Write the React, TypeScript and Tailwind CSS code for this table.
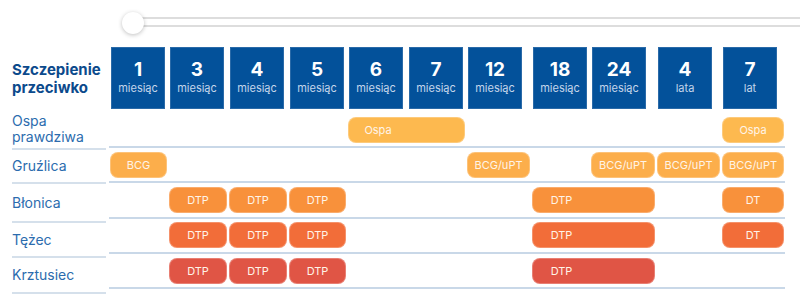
import React from 'react';

// Vaccination calendar: age columns with vaccine bars per disease row

const cols = 'grid grid-cols-[59px_60px_60px_59px_60px_59px_65px_59px_66px_65px_64px]';

type Bar = { start: number; span: number; label: string; firstWidth: number };

const ages = [
  { n: '1', unit: 'miesiąc' },
  { n: '3', unit: 'miesiąc' },
  { n: '4', unit: 'miesiąc' },
  { n: '5', unit: 'miesiąc' },
  { n: '6', unit: 'miesiąc' },
  { n: '7', unit: 'miesiąc' },
  { n: '12', unit: 'miesiąc' },
  { n: '18', unit: 'miesiąc' },
  { n: '24', unit: 'miesiąc' },
  { n: '4', unit: 'lata' },
  { n: '7', unit: 'lat' },
];

const dtp = (color: string): { color: string; bars: Bar[] } => ({
  color,
  bars: [
    { start: 2, span: 1, label: 'DTP', firstWidth: 58 },
    { start: 3, span: 1, label: 'DTP', firstWidth: 58 },
    { start: 4, span: 1, label: 'DTP', firstWidth: 57 },
    { start: 8, span: 2, label: 'DTP', firstWidth: 57 },
  ],
});

const rows: { color: string; bars: Bar[]; h: string }[] = [
  {
    color: 'bg-[#fdb94f]',
    h: 'h-[39px] pt-[8px]',
    bars: [
      { start: 5, span: 2, label: 'Ospa', firstWidth: 58 },
      { start: 11, span: 1, label: 'Ospa', firstWidth: 62 },
    ],
  },
  {
    color: 'bg-[#fcae4b]',
    h: 'h-[35px] pt-[4px]',
    bars: [
      { start: 1, span: 1, label: 'BCG', firstWidth: 57 },
      { start: 7, span: 1, label: 'BCG/uPT', firstWidth: 63 },
      { start: 9, span: 1, label: 'BCG/uPT', firstWidth: 64 },
      { start: 10, span: 1, label: 'BCG/uPT', firstWidth: 63 },
      { start: 11, span: 1, label: 'BCG/uPT', firstWidth: 62 },
    ],
  },
  {
    ...dtp('bg-[#f8913b]'),
    h: 'h-[36px] pt-[4px]',
    bars: [...dtp('').bars, { start: 11, span: 1, label: 'DT', firstWidth: 62 }],
  },
  {
    ...dtp('bg-[#f26d39]'),
    h: 'h-[35px] pt-[3px]',
    bars: [...dtp('').bars, { start: 11, span: 1, label: 'DT', firstWidth: 62 }],
  },
  { ...dtp('bg-[#e05545]'), h: 'h-[35px] pt-[4px]' },
];

const labels = [
  { text: ['Ospa', 'prawdziwa'], h: 'h-[41px]' },
  { text: ['Gruźlica'], h: 'h-[34px]' },
  { text: ['Błonica'], h: 'h-[39px]' },
  { text: ['Tężec'], h: 'h-[35px]' },
  { text: ['Krztusiec'], h: 'h-[36px]' },
];

const colStart = [
  '',
  'col-start-1',
  'col-start-2',
  'col-start-3',
  'col-start-4',
  'col-start-5',
  'col-start-6',
  'col-start-7',
  'col-start-8',
  'col-start-9',
  'col-start-10',
  'col-start-11',
];

export default function App() {
  return (
    <div className="w-[800px] h-[303px] bg-white overflow-hidden font-['Inter',sans-serif]">
      {/* Slider */}
      <div className="h-[47px] pt-[17px] pl-[133px] relative">
        <div className="h-[10px] border-y-2 border-[#dddddd] bg-white" />
        <div className="absolute left-[122px] top-[12px] w-[22px] h-[22px] rounded-full bg-white shadow-[0_1px_4px_rgba(0,0,0,0.25)]" />
      </div>

      <div className="flex">
        {/* Left labels */}
        <div className="w-[109px] pl-[12px] pr-[3px]">
          <div className="h-[62px] flex flex-col justify-center pt-[2px] text-[15px] leading-[18px] font-bold text-[#0c4a8c]">
            <span>Szczepienie</span>
            <span>przeciwko</span>
          </div>
          {labels.map((l, i) => (
            <div
              key={i}
              className={`${l.h} flex flex-col justify-center border-b-2 border-[#d5e0eb] text-[14px] leading-[16px] text-[#2c6cae]`}
            >
              {l.text.map((t) => (
                <span key={t}>{t}</span>
              ))}
            </div>
          ))}
        </div>

        {/* Chart */}
        <div className="w-[676px]">
          <div className={`${cols} h-[62px]`}>
            {ages.map((a, i) => (
              <div key={i} className="pl-[2px]">
                <div className="w-[54px] h-[62px] bg-[#03519a] border border-[#2a6aa8] flex flex-col items-center pt-[11px]">
                  <span className="text-[19px] leading-[22px] font-bold text-white">{a.n}</span>
                  <span className="text-[11px] leading-[14px] text-[#c3d5ea]">{a.unit}</span>
                </div>
              </div>
            ))}
          </div>
          {rows.map((r, ri) => (
            <div key={ri} className={`${cols} ${r.h} border-b-2 border-[#c9d8e8]`}>
              {r.bars.map((b, bi) => (
                <div
                  key={bi}
                  className={`${colStart[b.start]} ${b.span === 2 ? 'col-span-2' : 'col-span-1'} row-start-1 px-[1px]`}
                >
                  <div
                    className={`${r.color} h-[26px] rounded-[8px] border border-white/25 flex items-center text-[11px] text-[#fff4e8]`}
                  >
                    <span className="text-center" style={{ width: b.firstWidth }}>
                      {b.label}
                    </span>
                  </div>
                </div>
              ))}
            </div>
          ))}
        </div>
      </div>
    </div>
  );
}
